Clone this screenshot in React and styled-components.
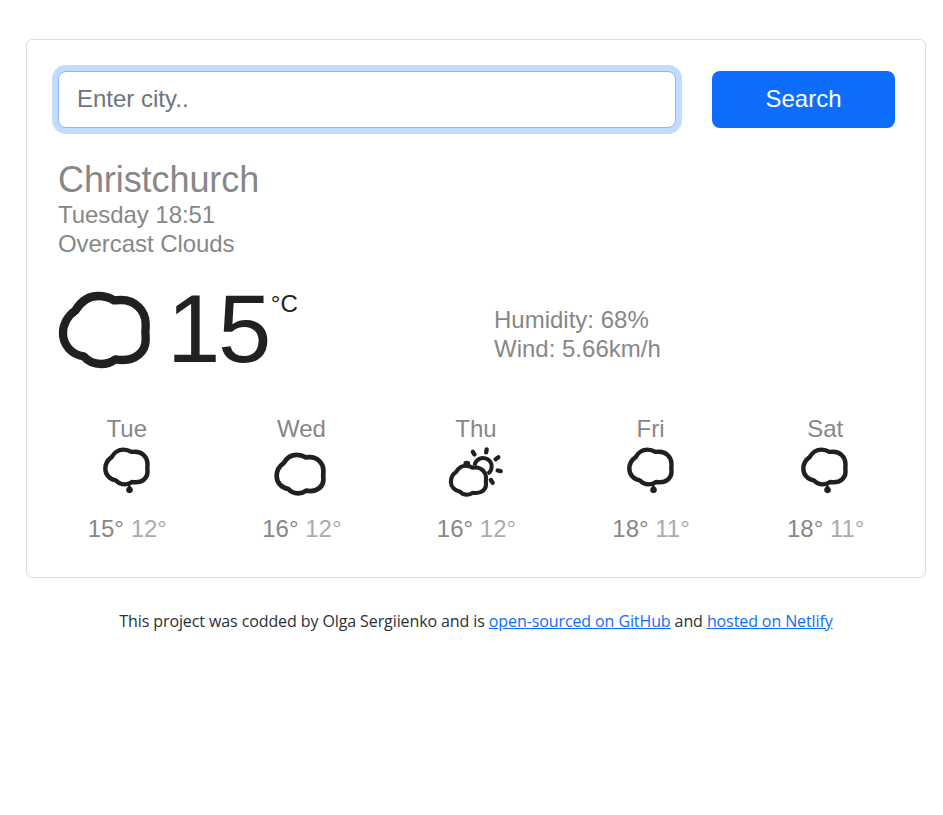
import React from "react";
import styled, { createGlobalStyle } from "styled-components";

const GlobalStyle = createGlobalStyle`
  *, *::before, *::after { box-sizing: border-box; }
  body { margin: 0; background: #fff; font-family: "Liberation Sans", Arial, sans-serif; }
`;

const Page = styled.div`
  padding: 39px 17px 0 26px;
`;

const Card = styled.main`
  height: 539px;
  border: 1px solid #dcdddf;
  border-radius: 6px;
  padding: 31px 30px 0 31px;
  color: #878787;
  font-size: 24px;
  line-height: 28.8px;
`;

const SearchForm = styled.form`
  display: flex;
  gap: 36px;
  height: 57px;
`;

const CityInput = styled.input`
  width: 618px;
  height: 57px;
  padding: 0 18px 2px;
  border: 1px solid #86b7fe;
  border-radius: 8px;
  outline: 0;
  box-shadow: 0 0 0 6px #c2dbff;
  color: #212529;
  font: 24px "Liberation Sans", Arial, sans-serif;
  &::placeholder { color: #6c757d; opacity: 1; }
`;

const SearchButton = styled.button`
  flex: 1;
  padding: 0 0 2px;
  border: 0;
  border-radius: 8px;
  background: #0d6efd;
  color: #fff;
  font: 24px "Liberation Sans", Arial, sans-serif;
`;

const City = styled.h1`
  margin: 30px 0 0;
  font-size: 36px;
  font-weight: 400;
  line-height: 43px;
  letter-spacing: -0.08px;
`;

const Details = styled.div`
  line-height: 28.8px;
  letter-spacing: -0.06px;
`;

const Current = styled.section`
  display: grid;
  grid-template-columns: 436px 1fr;
  height: 116px;
  margin-top: 14px;
`;

const Temperature = styled.div`
  display: flex;
  align-items: flex-start;
  padding-top: 18px;
  color: #212121;
`;

const Degrees = styled.span`
  margin: -12px 0 0 17px;
  font-size: 96px;
  line-height: 100px;
  letter-spacing: -2.5px;
`;

const Unit = styled.span`
  margin: -1px 0 0 2px;
`;

const Conditions = styled.div`
  padding-top: 33.5px;
`;

const Forecast = styled.section`
  display: grid;
  grid-template-columns: repeat(5, 174.6px);
  margin: 26px 0 0 -18.5px;
  text-align: center;
`;

const Day = styled.div`
  display: flex;
  flex-direction: column;
  align-items: center;
`;

const DayName = styled.div`
  margin-bottom: -3px;
`;

const Range = styled.div`
  margin: 11px 0 0 1px;
`;

const Low = styled.span`
  color: #ababab;
`;

const Icon = styled.svg`
  display: block;
  flex: none;
  overflow: visible;
  fill: none;
  stroke: #202020;
  stroke-linejoin: round;
`;

const Footer = styled.footer`
  margin-top: 31px;
  color: #2c3034;
  font: 400 16px/24px "Open Sans", "Segoe UI", sans-serif;
  letter-spacing: -0.1px;
  text-align: center;
  white-space: nowrap;
`;

const Link = styled.a`
  color: #0d6efd;
  text-decoration: underline;
`;

const CLOUD =
  "M76 92C91 66 115 48 145 48C163 48 179 53 192 61C199 60 206 60 214 60C255 60 287 92 287 132C287 142 287 150 286 158C287 164 287 170 287 180C287 216 256 240 218 240C209 240 202 239 196 238C184 247 170 252 153 252C132 252 113 243 101 229C66 224 39 196 39 160C39 132 54 107 76 92Z";

function CurrentIcon() {
  return (
    <Icon width="92" height="78" viewBox="24 33 276 234" strokeWidth="25">
      <path d={CLOUD} />
    </Icon>
  );
}

function CloudIcon() {
  return (
    <Icon width="64" height="64" viewBox="43 90 192 192">
      <path d={CLOUD} transform="translate(44 107.5) scale(.565)" strokeWidth="25" />
    </Icon>
  );
}

function RainIcon() {
  return (
    <Icon width="64" height="64" viewBox="44.4 90 192 192">
      <path d={CLOUD} transform="translate(55.5 94.5) scale(.51)" strokeWidth="26" />
      <path d="M148 222C145 231 138 233 138 239.500A10 10 0 0 0 158 239.500C158 233 151 231 148 222Z" fill="#202020" stroke="none" />
    </Icon>
  );
}

function SunCloudIcon() {
  return (
    <Icon width="64" height="64" viewBox="42 90 192 192">
      <path d={CLOUD} transform="translate(46 147) scale(.425)" strokeWidth="29" />
      <path d="M134 167A25.5 25.5 0 1 1 173 191" strokeWidth="12" />
      <path d="M128.500 125.500L133.500 133.500M170 118L168.500 127M205 142L197 147.500M203 181.500L212 183.500M182.500 210L188 218" strokeWidth="13" strokeLinecap="round" />
      <path d="M99 170L101 155Q110 149 120 156L121 170Z" fill="#202020" stroke="none" />
    </Icon>
  );
}

const days = [
  { name: "Tue", icon: RainIcon, high: 15, low: 12 },
  { name: "Wed", icon: CloudIcon, high: 16, low: 12 },
  { name: "Thu", icon: SunCloudIcon, high: 16, low: 12 },
  { name: "Fri", icon: RainIcon, high: 18, low: 11 },
  { name: "Sat", icon: RainIcon, high: 18, low: 11 },
];

export default function App() {
  return (
    <Page>
      <GlobalStyle />
      <Card>
        <SearchForm onSubmit={(event) => event.preventDefault()}>
          <CityInput placeholder="Enter city.." />
          <SearchButton>Search</SearchButton>
        </SearchForm>
        <City>Christchurch</City>
        <Details>
          <div>Tuesday 18:51</div>
          <div>Overcast Clouds</div>
        </Details>
        <Current>
          <Temperature>
            <CurrentIcon />
            <Degrees>15</Degrees>
            <Unit>°C</Unit>
          </Temperature>
          <Conditions>
            <div>Humidity: 68%</div>
            <div>Wind: 5.66km/h</div>
          </Conditions>
        </Current>
        <Forecast>
          {days.map(({ name, icon: DayIcon, high, low }) => (
            <Day key={name}>
              <DayName>{name}</DayName>
              <DayIcon />
              <Range>{high}° <Low>{low}°</Low></Range>
            </Day>
          ))}
        </Forecast>
      </Card>
      <Footer>
        This project was codded by Olga Sergiienko and is <Link href="#">open-sourced on GitHub</Link> and <Link href="#">hosted on Netlify</Link>
      </Footer>
    </Page>
  );
}
